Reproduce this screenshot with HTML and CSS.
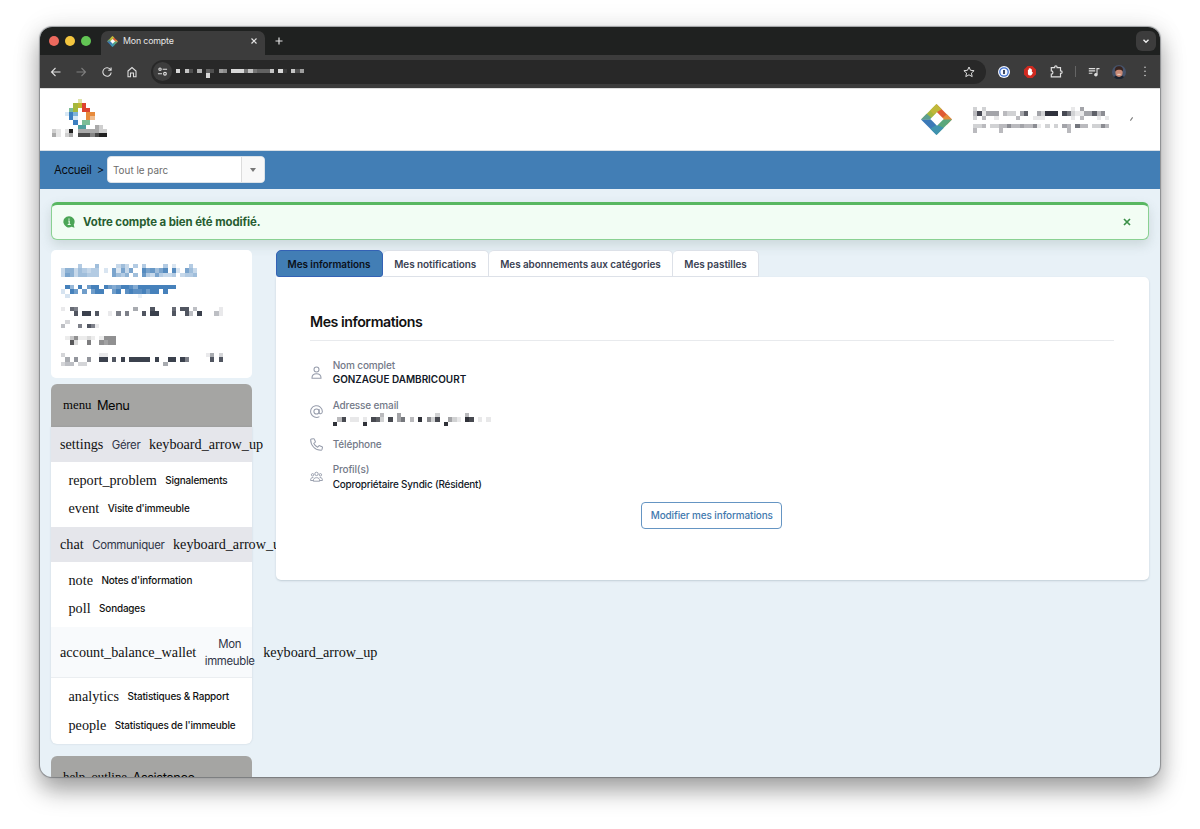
FILE: index.html
```html
<!DOCTYPE html>
<html lang="fr">
<head>
<meta charset="utf-8">
<title>Mon compte</title>
<link rel="stylesheet" href="styles.css">
</head>
<body>
<svg width="0" height="0" class="defs">
  <symbol id="logo" viewBox="0 0 30 30">
    <path d="M15 0 30 15H15z" fill="#e05a35"/>
    <path d="M25 10 30 15 25 20 19 15z" fill="#e28d3c"/>
    <path d="M15 0 0 15H15z" fill="#a4b63d"/>
    <path d="M15 0 20 5 12 10 9 6z" fill="#c0b83a"/>
    <path d="M0 15 5.500 9.500 12 15z" fill="#5d9f8f"/>
    <path d="M0 15 15 30V15z" fill="#3b79b7"/>
    <path d="M15 30 30 15H15z" fill="#5aa77c"/>
    <path d="M15 30 22 23 15 20 9 24z" fill="#3f93ae"/>
    <path d="M15.500 8 22 14.500 15.500 21 9 14.500z" fill="#fff"/>
  </symbol>
</svg>
<div class="window">
  <div class="tabstrip">
    <div class="lights"><i class="red"></i><i class="yellow"></i><i class="green"></i></div>
    <div class="tab">
      <svg class="favicon"><use href="#logo"/></svg>
      <span>Mon compte</span>
      <svg class="tabclose" viewBox="0 0 8 8"><path d="M1.500 1.500l5 5m0-5l-5 5"/></svg>
    </div>
    <svg class="plus" viewBox="0 0 8 8"><path d="M4 .5v7M.5 4h7"/></svg>
    <div class="chevbox"><svg viewBox="0 0 8 8"><path d="M1.500 2.800 4 5.300l2.500-2.500"/></svg></div>
  </div>
  <div class="toolbar">
    <div class="nav">
      <svg viewBox="0 0 12 12"><path d="M10.500 6h-9M5.500 2 1.500 6l4 4"/></svg>
      <svg class="off" viewBox="0 0 12 12"><path d="M1.500 6h9M6.500 2l4 4-4 4"/></svg>
      <svg viewBox="0 0 12 12"><path d="M9.600 3.800A4.200 4.200 0 1 0 10.200 6.500M10.100 1.500v2.800H7.200"/></svg>
      <svg viewBox="0 0 12 12"><path d="M2 5 6 1.500 10 5v5.700H7.500V7h-3v3.700H2z"/></svg>
    </div>
    <div class="address">
      <span class="site"><svg viewBox="0 0 12 12"><circle cx="3.300" cy="3.500" r="1.300"/><path d="M6.200 3.500H11M1 8.500h4.500"/><circle cx="8.700" cy="8.500" r="1.500"/></svg></span>
      <span class="mosaic url" data-color="235,235,235" data-rows="9.82.7.32.65.9994843338.91.826|.......9"></span>
      <svg class="star" viewBox="0 0 12 12"><path d="M6 1l1.500 3.300 3.600.4-2.700 2.400.8 3.500L6 8.800l-3.200 1.800.8-3.500L.9 4.700l3.600-.4z"/></svg>
    </div>
    <div class="ext">
      <svg viewBox="0 0 12 12"><circle cx="6" cy="6" r="6" fill="#f4f7fd" stroke="none"/><circle cx="6" cy="6" r="4.200" stroke="#3d6fd0" stroke-width="1.300"/><path d="M6 4v4" stroke="#1d2b4a" stroke-width="1.700"/></svg>
      <svg viewBox="0 0 12 12"><path d="M3.600 0h4.800L12 3.600v4.800L8.400 12H3.600L0 8.400V3.600z" fill="#cf2a20" stroke="none"/><path d="M3.900 4v3.600c0 1.300.8 2 2 2s2.200-1 2.600-2.200l.4-1.500-1 .4V3.200h-.9v-.6h-1v-.4h-.9v.6H4.600V4z" fill="#fff" stroke="none"/></svg>
      <svg class="puzzle" viewBox="0 0 12 12"><path d="M1.200 2.500h3.100V1.900a1.100 1.100 0 0 1 2.200 0v.6h3.200v3h.4a1.100 1.100 0 0 1 0 2.200h-.4V11H1.200V8.400a1.500 1.500 0 0 0 0-3z"/></svg>
      <b></b>
      <svg class="queue" viewBox="0 0 12 12"><path d="M.8 2.600h6.400M.8 4.900h6.400M.8 7.200h3.600M9 8.500V2.600h2.500"/><circle cx="7.900" cy="8.700" r="1.200" fill="#ddd"/></svg>
      <svg class="avatar" viewBox="0 0 14 14"><circle cx="7" cy="7" r="7" fill="#46536b" stroke="none"/><path d="M2 12.300c1-2.600 9-2.600 10 0A7 7 0 0 1 2 12.300z" fill="#1d2430" stroke="none"/><ellipse cx="7" cy="7.500" rx="3.600" ry="4.400" fill="#c98a75" stroke="none"/><path d="M3 6.500C2.500 2 5 1.200 7.200 1.300S11.600 3 11 6.500C10 4.500 5 4 3 6.500z" fill="#38241f" stroke="none"/><path d="M5.300 9.300h3.400" stroke="#f3ddd4" stroke-width=".9"/></svg>
      <svg class="dots" viewBox="0 0 4 12"><path d="M2 1.300h.01M2 5.800h.01M2 10.300h.01"/></svg>
    </div>
  </div>

  <div class="header">
    <svg class="brand" viewBox="0 0 13 9" shape-rendering="crispEdges"></svg>
    <svg class="logo"><use href="#logo"/></svg>
    <span class="mosaic user" data-color="25,28,40" data-rows="2.2....................1.4......|381444.322.47..42999.8621144735.|2.3..1....3...111......1.3...1.1|................................|223.223353343351.2.2.43.633.2253|3.....3...............3........."></span>
    <i class="tick"></i>
  </div>

  <div class="crumbs">
    <span>Accueil</span><span>&gt;</span>
    <div class="select"><span>Tout le parc</span><i></i></div>
  </div>

  <div class="page">
    <div class="alert">
      <svg class="info" viewBox="0 0 12 12"><path d="M6 .2a5.600 5.600 0 1 0 2.500 10.600l3 .9-.8-2.900A5.600 5.600 0 0 0 6 .2z" fill="#4ba556"/><path d="M5.200 5h1v3.400M4.700 8.500h2.900M6 2.600v1.100" stroke="#effbf1" stroke-width="1.100" fill="none"/></svg>
      <span>Votre compte a bien été modifié.</span>
      <svg class="dismiss" viewBox="0 0 8 8"><path d="M1 1l6 6M7 1L1 7"/></svg>
    </div>
    <div class="columns">
      <aside>
        <div class="card profile">
          <span class="mosaic" data-color="66,126,184" data-rows="....4...5....353.4.4....4.2...4.|366354344.2.72737..978579.92.753.|376355444...7546.5.84374334.3445"></span>
          <span class="mosaic" data-color="50,115,180" data-rows=".95.9.799.97679986999999999|2.97.7.799..79.89889799.9|.2................1"></span>
          <span class="mosaic" data-color="38,44,58" data-rows="1.76.............4...8....7.88.3.....1|...8.99.8..1.6.6...8.99...8..83.9...31|.|.2|3...6.861"></span>
          <span class="mosaic" data-color="70,70,72" data-rows=".1361121.1666|..92..7..6566"></span>
          <span class="mosaic" data-color="38,44,58" data-rows="2........11.......................14.2|.4.5..5..99.8.9.99999.9..99.96.....8.8|233.22..................4"></span>
        </div>
        <div class="menuhead m1"><i>menu</i><span>Menu</span></div>
        <div class="menu">
          <div class="group"><i>settings</i><span>Gérer</span><i>keyboard_arrow_up</i></div>
          <div class="items">
            <div><i>report_problem</i><span>Signalements</span></div>
            <div><i>event</i><span>Visite d'immeuble</span></div>
          </div>
          <div class="group"><i>chat</i><span>Communiquer</span><i>keyboard_arrow_up</i></div>
          <div class="items">
            <div><i>note</i><span>Notes d'information</span></div>
            <div><i>poll</i><span>Sondages</span></div>
          </div>
          <div class="group tall"><i>account_balance_wallet</i><span>Mon<br>immeuble</span><i>keyboard_arrow_up</i></div>
          <div class="items">
            <div><i>analytics</i><span>Statistiques &amp; Rapport</span></div>
            <div><i>people</i><span>Statistiques de l'immeuble</span></div>
          </div>
        </div>
        <div class="menuhead m2"><i>help_outline</i><span>Assistance</span></div>
      </aside>
      <main>
        <div class="tabs">
          <span class="t1 active">Mes informations</span><span class="t2">Mes notifications</span><span class="t3">Mes abonnements aux catégories</span><span class="t4">Mes pastilles</span>
        </div>
        <section class="panel">
          <h2>Mes informations</h2>
          <div class="row r1">
            <svg viewBox="0 0 12 12"><circle cx="6" cy="3.200" r="2.300"/><path d="M1.800 11.300c0-3 1.500-4.200 4.200-4.200s4.200 1.200 4.200 4.200z"/></svg>
            <div><label>Nom complet</label><strong>GONZAGUE DAMBRICOURT</strong></div>
          </div>
          <div class="row r2">
            <svg viewBox="0 0 12 12"><circle cx="6" cy="6" r="2.400"/><path d="M8.400 3.600v3.200c0 2 3 1.600 3-.8A5.400 5.400 0 1 0 8.700 10.700"/></svg>
            <div><label>Adresse email</label><span class="mosaic" data-color="25,28,36" data-rows="...........3...4........2......3|.38.11.1.872.8.46.3.9.528..421.98.1.1|9......9..................9"></span></div>
          </div>
          <div class="row r3">
            <svg viewBox="0 0 12 12"><path d="M1.200.9 3.300.6c.4 0 .6.200.7.500l.9 2.100c.1.300 0 .6-.2.800l-1.200 1c.9 1.800 1.900 2.700 3.600 3.500l1-1.200c.2-.3.500-.3.800-.2l2.200.9c.3.200.5.400.4.800l-.5 2c-.1.300-.4.600-.8.600C4.900 11.400.6 7 .6 1.700c0-.4.200-.7.600-.8z"/></svg>
            <div><label>Téléphone</label></div>
          </div>
          <div class="row r4">
            <svg viewBox="0 0 13 12"><circle cx="6.500" cy="3.400" r="1.700"/><circle cx="2.600" cy="4.300" r="1.200"/><circle cx="10.400" cy="4.300" r="1.200"/><path d="M3.300 10.700c0-2.600 1.200-3.500 3.200-3.500s3.200.9 3.200 3.500zM3.300 10H.6c0-2 .5-3 2.700-3M9.700 10h2.700c0-2-.5-3-2.700-3"/></svg>
            <div><label>Profil(s)</label><em>Copropriétaire Syndic (Résident)</em></div>
          </div>
          <button>Modifier mes informations</button>
        </section>
      </main>
    </div>
  </div>
</div>
<script src="mosaic.js"></script>
</body>
</html>
```
FILE: styles.css
```css
* { box-sizing: border-box; }
body { margin: 0; width: 1200px; height: 829px; overflow: hidden; background: #fff; padding: 27px 0 0 39.500px; font-family: Inter, "Liberation Sans", sans-serif; color: #111; }
.defs { position: absolute; }
i, em { font-style: normal; }
svg { fill: none; flex: none; display: block; }
.window { width: 1120.500px; height: 750px; border-radius: 12px; overflow: hidden; background: #e8f1f7; display: flex; flex-direction: column; box-shadow: 0 0 1px 1px rgba(60,65,70,.45), 0 13px 24px rgba(0,0,0,.36), 0 0 28px rgba(0,0,0,.09); }

.tabstrip { height: 28px; flex: none; background: #1f2120; display: flex; align-items: center; padding-right: 4px; }
.lights { display: flex; gap: 6.300px; padding-left: 9px; width: 61px; }
.lights i { width: 10px; height: 10px; border-radius: 50%; }
.red { background: #ed6a5e; } .yellow { background: #f4c63f; } .green { background: #62c554; }
.tab { width: 164px; height: 24px; align-self: flex-end; border-radius: 7px 7px 0 0; background: #3c3c3c; display: flex; align-items: center; padding: 0 7px 4px 6px; color: #e6e6e6; font-size: 8.800px; letter-spacing: -.15px; }
.tab span { flex: 1; margin-left: 5.500px; padding-bottom: 1px; }
.favicon { width: 11px; height: 11px; }
.tabclose, .plus { width: 8px; height: 8px; stroke: #e2e2e2; stroke-width: 1.200; }
.plus { margin-left: 10px; }
.chevbox { margin-left: auto; width: 20px; height: 20px; border-radius: 6px; background: #3c3c3c; display: grid; place-items: center; }
.chevbox svg { width: 8px; stroke: #eee; stroke-width: 1.400; }
.toolbar { height: 33px; flex: none; background: #3c3c3c; display: flex; align-items: center; stroke: #dedede; }
.nav { display: flex; gap: 13.500px; padding-left: 10px; width: 111px; }
.nav svg { width: 12px; height: 12px; stroke-width: 1.100; }
.nav .off { stroke: #7e7e7e; }
.address { width: 835.500px; height: 24px; border-radius: 12px; background: #282828; display: flex; align-items: center; padding: 0 11px 0 2px; }
.site { width: 19px; height: 19px; border-radius: 50%; background: #3d3d3d; display: grid; place-items: center; }
.site svg { width: 11px; stroke-width: 1.200; }
.url { margin: 4px 0 0 4px; }
.star { width: 12px; height: 12px; margin-left: auto; stroke-width: 1; }
.ext { display: flex; align-items: center; flex: 1; padding-left: 12px; }
.ext svg { width: 12px; height: 12px; margin-right: 14px; }
.ext .puzzle { width: 13px; height: 13px; stroke-width: 1.100; margin-right: 12px; }
.ext b { width: 1px; height: 11px; background: #656565; margin-right: 12px; }
.ext .queue { width: 12px; height: 12px; stroke-width: 1.100; margin-right: 12px; }
.ext .avatar { width: 14px; height: 14px; margin-right: 17px; }
.ext .dots { width: 4px; height: 11px; stroke-width: 1.600; stroke-linecap: round; margin: 0; }

.header { height: 63px; flex: none; background: #fff; border-top: 1px solid #ddd; border-bottom: 1px solid #d9e0e6; display: flex; align-items: flex-start; }
.brand { width: 55.400px; height: 38.400px; margin: 10px 0 0 12.800px; }
.logo { width: 31px; height: 31px; margin: 15px 0 0 auto; }
.user { margin: 18px 0 0 21.500px; width: 158px; }
.tick { width: 1px; height: 4px; background: #777; transform: rotate(35deg); margin: 28px 28px 0 0; }
.mosaic { display: block; line-height: 0; }
.mosaic svg { display: block; overflow: visible; }

.crumbs { height: 38px; flex: none; background: #427eb5; display: flex; align-items: center; padding-left: 14.500px; font-size: 11.400px; letter-spacing: -.35px; gap: 5.500px; color: #080b10; }
.select { width: 158px; height: 27px; border: 1px solid #dbe2e8; border-radius: 4px; background: #fff; display: flex; align-items: center; font-size: 9.900px; letter-spacing: 0; color: #6c6c6c; padding-left: 5.500px; margin-left: -3px; margin-bottom: 1px; }
.select span { flex: 1; }
.select i { width: 23px; height: 25px; background: #f8f8f8; border-left: 1px solid #dcdcdc; border-radius: 0 4px 4px 0; display: grid; place-items: center; }
.select i::after { content: ""; border: 3px solid transparent; border-top: 4px solid #777; border-bottom: 0; }

.page { padding: 13px 11.500px 0; }
.alert { height: 37.500px; border: 1px solid #8ad192; border-top: 3px solid #58b761; border-radius: 6px; background: #f2fdf4; display: flex; align-items: center; padding: 0 17px 0 11px; font-weight: 700; font-size: 11.400px; letter-spacing: -.08px; color: #275d31; box-shadow: 0 5px 12px rgba(70,100,90,.18); }
.alert .info { width: 12px; height: 12px; margin-right: 8px; }
.dismiss { width: 8px; height: 8px; stroke: #3b9148; stroke-width: 1.700; margin-left: auto; }
.columns { display: flex; align-items: flex-start; padding-top: 10.500px; }
aside { width: 201px; margin-right: 23.500px; flex: none; }
.profile { height: 127.500px; background: #fff; border-radius: 5px; padding: 14px 0 0 10px; }
.profile .mosaic + .mosaic { margin-top: 8.500px; }
.menuhead { height: 43px; margin-top: 6.500px; background: #a5a5a3; border-radius: 6px 6px 0 0; display: flex; align-items: center; gap: 5.500px; padding-left: 12px; font-size: 12.800px; letter-spacing: -.4px; color: #050505; }
.menuhead i, .menu i { font-family: "Liberation Serif", serif; white-space: nowrap; letter-spacing: 0; }
.menuhead i { font-size: 12.800px; }
.m2 { margin-top: 12px; }
.menu { background: #fff; border-radius: 0 0 6px 6px; box-shadow: 0 0 2px rgba(60,80,100,.2); }
.menu i { font-size: 14.200px; }
.group { height: 34.500px; background: #e5e6eb; display: flex; align-items: center; gap: 8.500px; padding-left: 9px; font-size: 11.400px; letter-spacing: -.33px; color: #303548; }
.group span { padding-top: 1px; }
.group i { color: #111; }
.group.tall { height: 51px; background: #f8fafc; border-bottom: 1px solid #ebeef1; text-align: center; line-height: 17px; }
.items { height: 65.500px; padding: 4.500px 0 0 17.500px; font-size: 9.950px; letter-spacing: -.18px; font-weight: 500; }
.items div { height: 28.400px; display: flex; align-items: center; gap: 8.500px; white-space: nowrap; }
.items span { padding-bottom: 1px; }

main { width: 873.500px; position: relative; }
.tabs { display: flex; height: 27px; }
.tabs span { background: #fff; border: 1px solid #dde1e8; border-left: 0; border-radius: 5px 5px 0 0; font-size: 9.950px; letter-spacing: -.06px; font-weight: 600; color: #3a4152; display: grid; place-items: center; white-space: nowrap; }
.tabs .t1 { width: 107px; background: #427eb5; border: 1px solid #3462b5; border-radius: 5px 5px 3px 3px; color: #0a1019; }
.tabs .t2 { width: 106.500px; } .tabs .t3 { width: 184px; } .tabs .t4 { width: 86px; }
.panel { height: 303px; background: #fff; border-radius: 0 5px 5px 5px; box-shadow: 0 1px 2px rgba(60,80,100,.22); padding: 35px 35px 0 34.500px; display: flex; flex-direction: column; }
h2 { margin: 0; font-size: 14.200px; letter-spacing: -.46px; line-height: 20px; font-weight: 600; height: 28.500px; border-bottom: 1px solid #e8eaed; flex: none; }
.row { display: flex; align-items: center; gap: 9.700px; height: 28px; color: #111827; font-size: 9.950px; }
.row > svg { width: 13px; height: 13px; stroke: #969cab; stroke-width: .95; stroke-linejoin: round; }
.row label, .row strong, .row em { display: block; line-height: 14.200px; }
.row label { font-size: 10px; letter-spacing: -.14px; font-weight: 500; color: #737988; }
.row strong { font-weight: 600; }
.row em { font-weight: 500; letter-spacing: -.19px; }
.row .mosaic { height: 13px; padding-top: 1px; }
.r1 { margin-top: 17.500px; } .r2 { margin-top: 11.500px; } .r3 { height: 15px; margin-top: 11px; } .r4 { margin-top: 11px; }
button { align-self: center; width: 141px; height: 27px; margin-top: 11.500px; border: 1px solid #6595c3; border-radius: 4px; background: #fff; color: #4279ae; font: 500 9.950px Inter, sans-serif; letter-spacing: -.1px; padding: 0 0 1px; white-space: nowrap; }
```
FILE: mosaic.js
```javascript
const NS = "http://www.w3.org/2000/svg";
const CELL = 4.26;

function cell(svg, x, y, size, fill) {
  const r = document.createElementNS(NS, "rect");
  r.setAttribute("x", x * size);
  r.setAttribute("y", y * size);
  r.setAttribute("width", size);
  r.setAttribute("height", size);
  r.setAttribute("fill", fill);
  r.setAttribute("stroke", "none");
  svg.appendChild(r);
}

// Each digit is the strength of one redacted cell; a dot leaves it empty.
document.querySelectorAll(".mosaic").forEach(el => {
  const rows = el.dataset.rows.split("|");
  const svg = document.createElementNS(NS, "svg");
  svg.setAttribute("width", Math.max(...rows.map(r => r.length)) * CELL);
  svg.setAttribute("height", rows.length * CELL);
  svg.setAttribute("shape-rendering", "crispEdges");
  rows.forEach((row, y) => [...row].forEach((c, x) => {
    if (c >= "1" && c <= "9") cell(svg, x, y, CELL, `rgba(${el.dataset.color},${c / 10})`);
  }));
  el.appendChild(svg);
});

const palette = {
  y: "#dfe3a8", g: "#a5b83c", G: "#c1b52f", r: "#dd4330", o: "#e78a3b", O: "#f0bc8e",
  b: "#3d7fc0", B: "#7eb2d8", l: "#d7e8f5", t: "#4f9f9c", T: "#7cbd96", p: "#f6cbc0",
  1: "#e6e6e6", 2: "#cfcfcf", 3: "#aaa", 4: "#858585", 5: "#4b4b4b", 6: "#222"
};
const brand = document.querySelector(".brand");
[
  "......y......",
  ".....gGr.....",
  "....Tg.rr....",
  "...lbB..oo...",
  "....bl..oO...",
  ".....b.TT....",
  "......tt..32.",
  "21.16.3333322",
  "31.23.5554566"
].forEach((row, y) => [...row].forEach((c, x) => {
  if (palette[c]) cell(brand, x, y, 1, palette[c]);
}));
```
